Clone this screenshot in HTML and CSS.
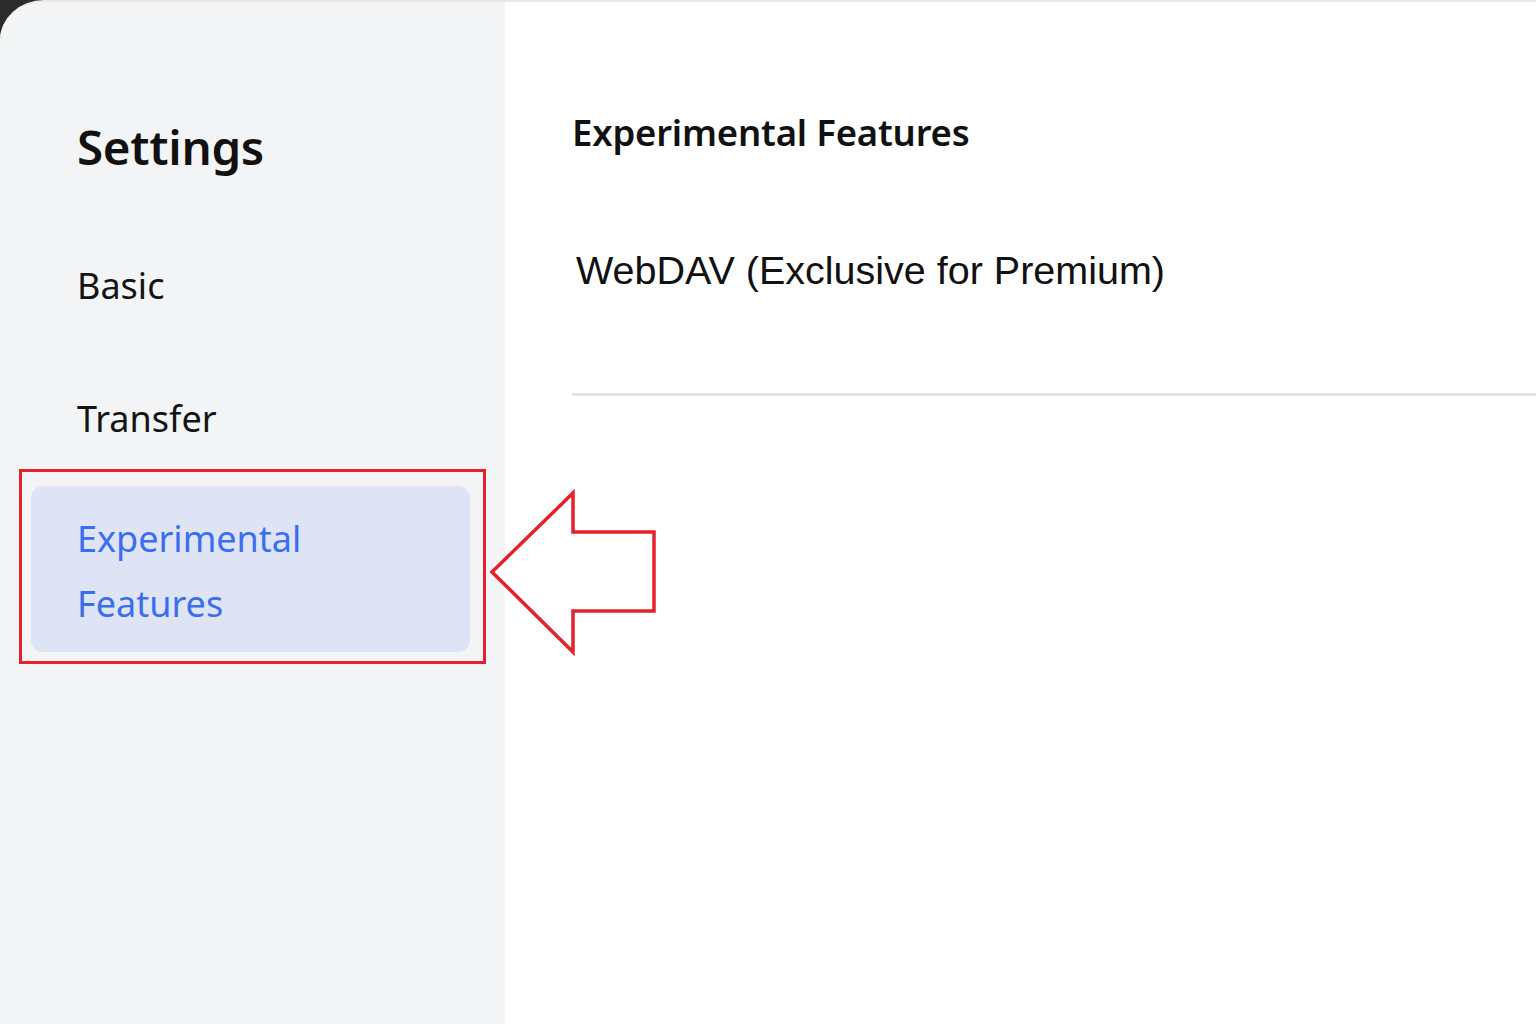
FILE: index.html
```html
<!DOCTYPE html>
<html lang="en">
<head>
<meta charset="utf-8">
<title>Settings</title>
<link rel="stylesheet" href="styles.css">
</head>
<body>
<div class="window">
  <aside class="sidebar">
    <h1 class="sidebar-title">Settings</h1>
    <nav class="nav">
      <div class="nav-item nav-basic">Basic</div>
      <div class="nav-item">Transfer</div>
      <div class="nav-item active">Experimental<br>Features</div>
    </nav>
  </aside>
  <main class="content">
    <h2 class="content-title">Experimental Features</h2>
    <div class="option">WebDAV (Exclusive for Premium)</div>
    <div class="divider"></div>
  </main>
  <div class="highlight-box"></div>
  <svg class="arrow" width="180" height="180" viewBox="0 0 180 180" aria-hidden="true">
    <polygon points="12,92 93,13 93,52 174,52 174,131 93,131 93,172" fill="#ffffff" stroke="#e3222b" stroke-width="3.5" stroke-linejoin="miter"/>
  </svg>
</div>
</body>
</html>
```
FILE: styles.css
```css
* { box-sizing: border-box; }
html, body {
  margin: 0;
  padding: 0;
  width: 1536px;
  height: 1024px;
  overflow: hidden;
  background: #2b2b2b;
}
.window {
  position: relative;
  width: 1536px;
  height: 1024px;
  display: flex;
  background: #ffffff;
  border-top: 2px solid #e8e8e8;
  border-top-left-radius: 44px 40px;
  overflow: hidden;
  font-family: "Noto Sans", "Open Sans", sans-serif;
  color: #111111;
}
.sidebar {
  width: 505px;
  flex: none;
  background: #f3f4f6;
  padding: 0 35px 0 31px;
  display: flex;
  flex-direction: column;
}
.sidebar-title {
  margin: 120px 0 0 46px;
  font-size: 47.5px;
  line-height: 49px;
  font-weight: 600;
  letter-spacing: -0.3px;
}
.nav {
  margin-top: 62px;
  display: flex;
  flex-direction: column;
  gap: 18px;
}
.nav-item {
  padding: 20px 0 14px 46px;
  font-size: 36px;
  line-height: 65px;
  font-weight: 400;
  color: #141414;
  border-radius: 12px;
}
.nav-basic { margin-bottom: 16px; }
.nav-item.active {
  margin-top: 3px;
  background: #dee4f5;
  color: #3b6df0;
  padding-bottom: 16px;
}
.content {
  flex: 1;
  padding: 112px 0 0 67px;
  display: flex;
  flex-direction: column;
}
.content-title {
  margin: 0;
  font-size: 36.5px;
  line-height: 36px;
  font-weight: 600;
  letter-spacing: -0.2px;
}
.option {
  margin: 100px 0 0 4px;
  font-family: "Liberation Sans", Arial, sans-serif;
  font-size: 39.5px;
  line-height: 40px;
  color: #111111;
}
.divider {
  margin-top: 103px;
  height: 3px;
  background: #e4e4e4;
}
.highlight-box {
  position: absolute;
  left: 19px;
  top: 467px;
  width: 467px;
  height: 195px;
  border: 3.5px solid #e3222b;
}
.arrow {
  position: absolute;
  left: 480px;
  top: 478px;
}
```
